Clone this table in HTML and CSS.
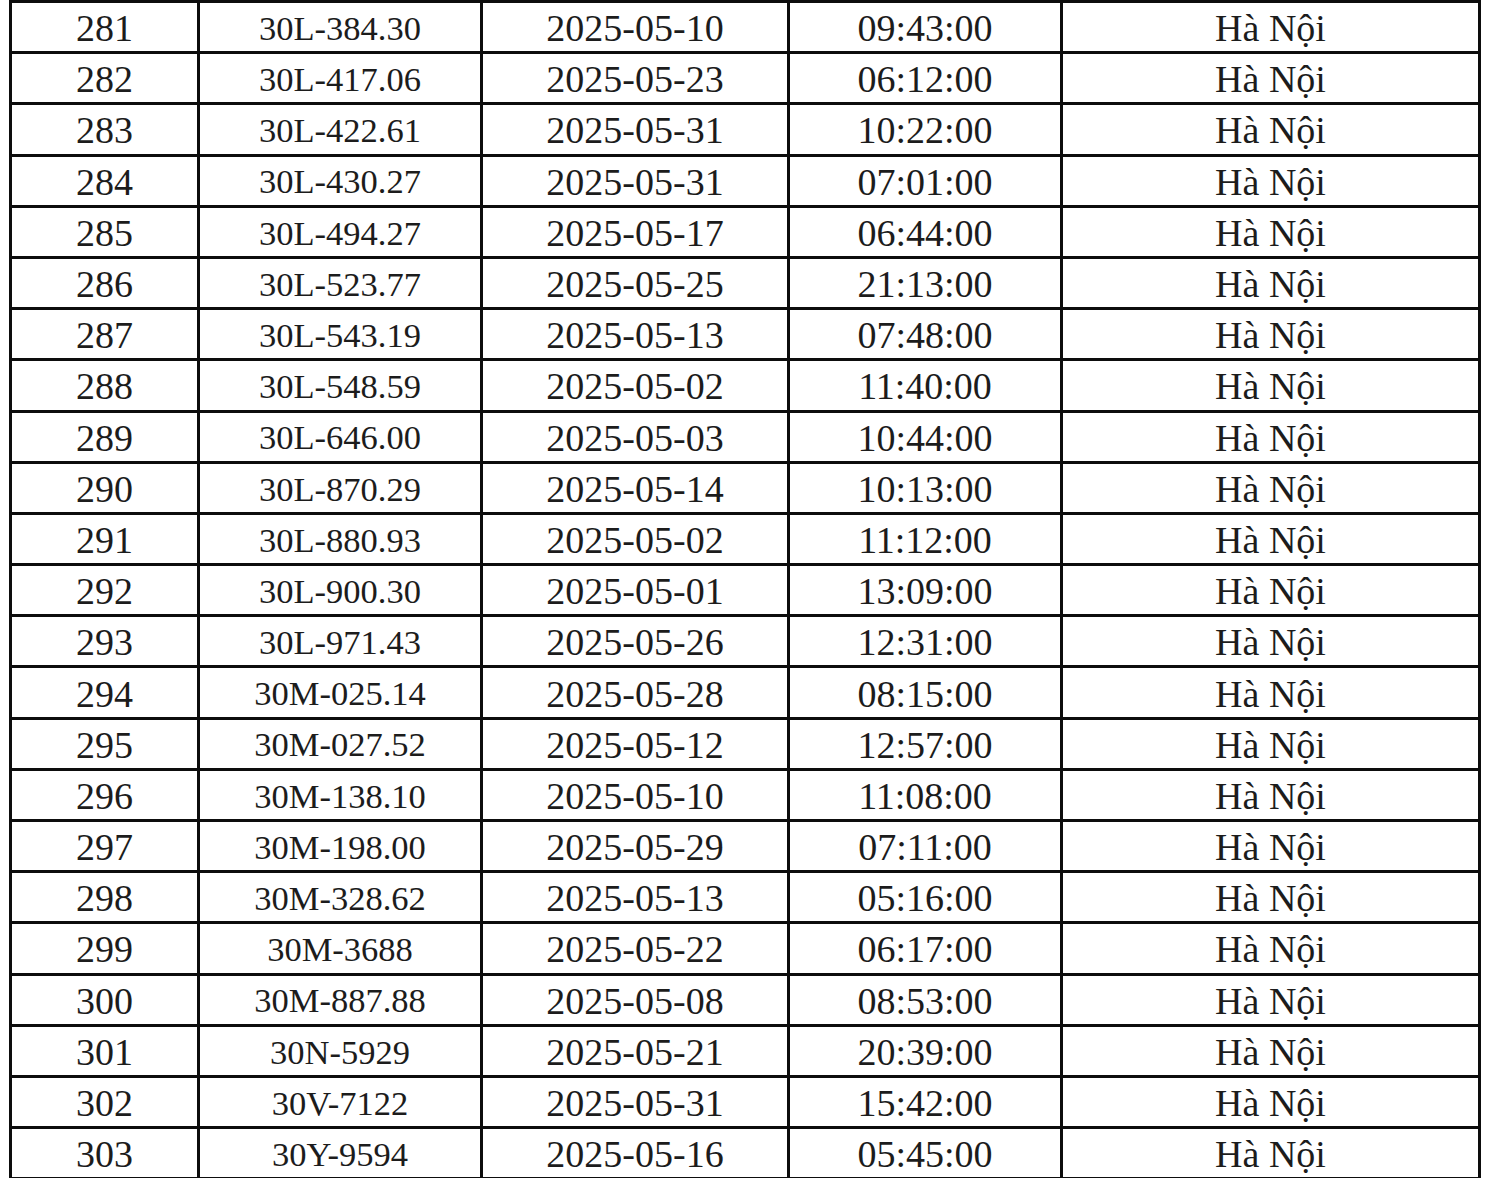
FILE: index.html
```html
<!DOCTYPE html>
<html lang="vi">
<head>
<meta charset="utf-8">
<title>Danh sách</title>
<link rel="stylesheet" href="styles.css">
</head>
<body>
<div class="sheet">
  <div class="cell">281</div><div class="cell plate">30L-384.30</div><div class="cell">2025-05-10</div><div class="cell">09:43:00</div><div class="cell">Hà Nội</div>
  <div class="cell">282</div><div class="cell plate">30L-417.06</div><div class="cell">2025-05-23</div><div class="cell">06:12:00</div><div class="cell">Hà Nội</div>
  <div class="cell">283</div><div class="cell plate">30L-422.61</div><div class="cell">2025-05-31</div><div class="cell">10:22:00</div><div class="cell">Hà Nội</div>
  <div class="cell">284</div><div class="cell plate">30L-430.27</div><div class="cell">2025-05-31</div><div class="cell">07:01:00</div><div class="cell">Hà Nội</div>
  <div class="cell">285</div><div class="cell plate">30L-494.27</div><div class="cell">2025-05-17</div><div class="cell">06:44:00</div><div class="cell">Hà Nội</div>
  <div class="cell">286</div><div class="cell plate">30L-523.77</div><div class="cell">2025-05-25</div><div class="cell">21:13:00</div><div class="cell">Hà Nội</div>
  <div class="cell">287</div><div class="cell plate">30L-543.19</div><div class="cell">2025-05-13</div><div class="cell">07:48:00</div><div class="cell">Hà Nội</div>
  <div class="cell">288</div><div class="cell plate">30L-548.59</div><div class="cell">2025-05-02</div><div class="cell">11:40:00</div><div class="cell">Hà Nội</div>
  <div class="cell">289</div><div class="cell plate">30L-646.00</div><div class="cell">2025-05-03</div><div class="cell">10:44:00</div><div class="cell">Hà Nội</div>
  <div class="cell">290</div><div class="cell plate">30L-870.29</div><div class="cell">2025-05-14</div><div class="cell">10:13:00</div><div class="cell">Hà Nội</div>
  <div class="cell">291</div><div class="cell plate">30L-880.93</div><div class="cell">2025-05-02</div><div class="cell">11:12:00</div><div class="cell">Hà Nội</div>
  <div class="cell">292</div><div class="cell plate">30L-900.30</div><div class="cell">2025-05-01</div><div class="cell">13:09:00</div><div class="cell">Hà Nội</div>
  <div class="cell">293</div><div class="cell plate">30L-971.43</div><div class="cell">2025-05-26</div><div class="cell">12:31:00</div><div class="cell">Hà Nội</div>
  <div class="cell">294</div><div class="cell plate">30M-025.14</div><div class="cell">2025-05-28</div><div class="cell">08:15:00</div><div class="cell">Hà Nội</div>
  <div class="cell">295</div><div class="cell plate">30M-027.52</div><div class="cell">2025-05-12</div><div class="cell">12:57:00</div><div class="cell">Hà Nội</div>
  <div class="cell">296</div><div class="cell plate">30M-138.10</div><div class="cell">2025-05-10</div><div class="cell">11:08:00</div><div class="cell">Hà Nội</div>
  <div class="cell">297</div><div class="cell plate">30M-198.00</div><div class="cell">2025-05-29</div><div class="cell">07:11:00</div><div class="cell">Hà Nội</div>
  <div class="cell">298</div><div class="cell plate">30M-328.62</div><div class="cell">2025-05-13</div><div class="cell">05:16:00</div><div class="cell">Hà Nội</div>
  <div class="cell">299</div><div class="cell plate">30M-3688</div><div class="cell">2025-05-22</div><div class="cell">06:17:00</div><div class="cell">Hà Nội</div>
  <div class="cell">300</div><div class="cell plate">30M-887.88</div><div class="cell">2025-05-08</div><div class="cell">08:53:00</div><div class="cell">Hà Nội</div>
  <div class="cell">301</div><div class="cell plate">30N-5929</div><div class="cell">2025-05-21</div><div class="cell">20:39:00</div><div class="cell">Hà Nội</div>
  <div class="cell">302</div><div class="cell plate">30V-7122</div><div class="cell">2025-05-31</div><div class="cell">15:42:00</div><div class="cell">Hà Nội</div>
  <div class="cell">303</div><div class="cell plate">30Y-9594</div><div class="cell">2025-05-16</div><div class="cell">05:45:00</div><div class="cell">Hà Nội</div>
</div>
</body>
</html>
```

FILE: styles.css
```css
html, body {
  margin: 0;
  padding: 0;
  background: #ffffff;
}

.sheet {
  margin-left: 9px;
  width: max-content;
  display: grid;
  grid-template-columns: 185px 280px 304px 270px 415px;
  grid-auto-rows: 48.2px;
  gap: 3px;
  padding: 3px;
  background: #0d0d0d;
}

.cell {
  background: #ffffff;
  display: flex;
  align-items: center;
  justify-content: center;
  font-family: "Liberation Serif", "Times New Roman", serif;
  font-size: 38px;
  color: #1c1c1c;
  line-height: 1;
  padding-top: 2px;
  box-sizing: border-box;
}

.plate {
  font-size: 34.5px;
}
```
